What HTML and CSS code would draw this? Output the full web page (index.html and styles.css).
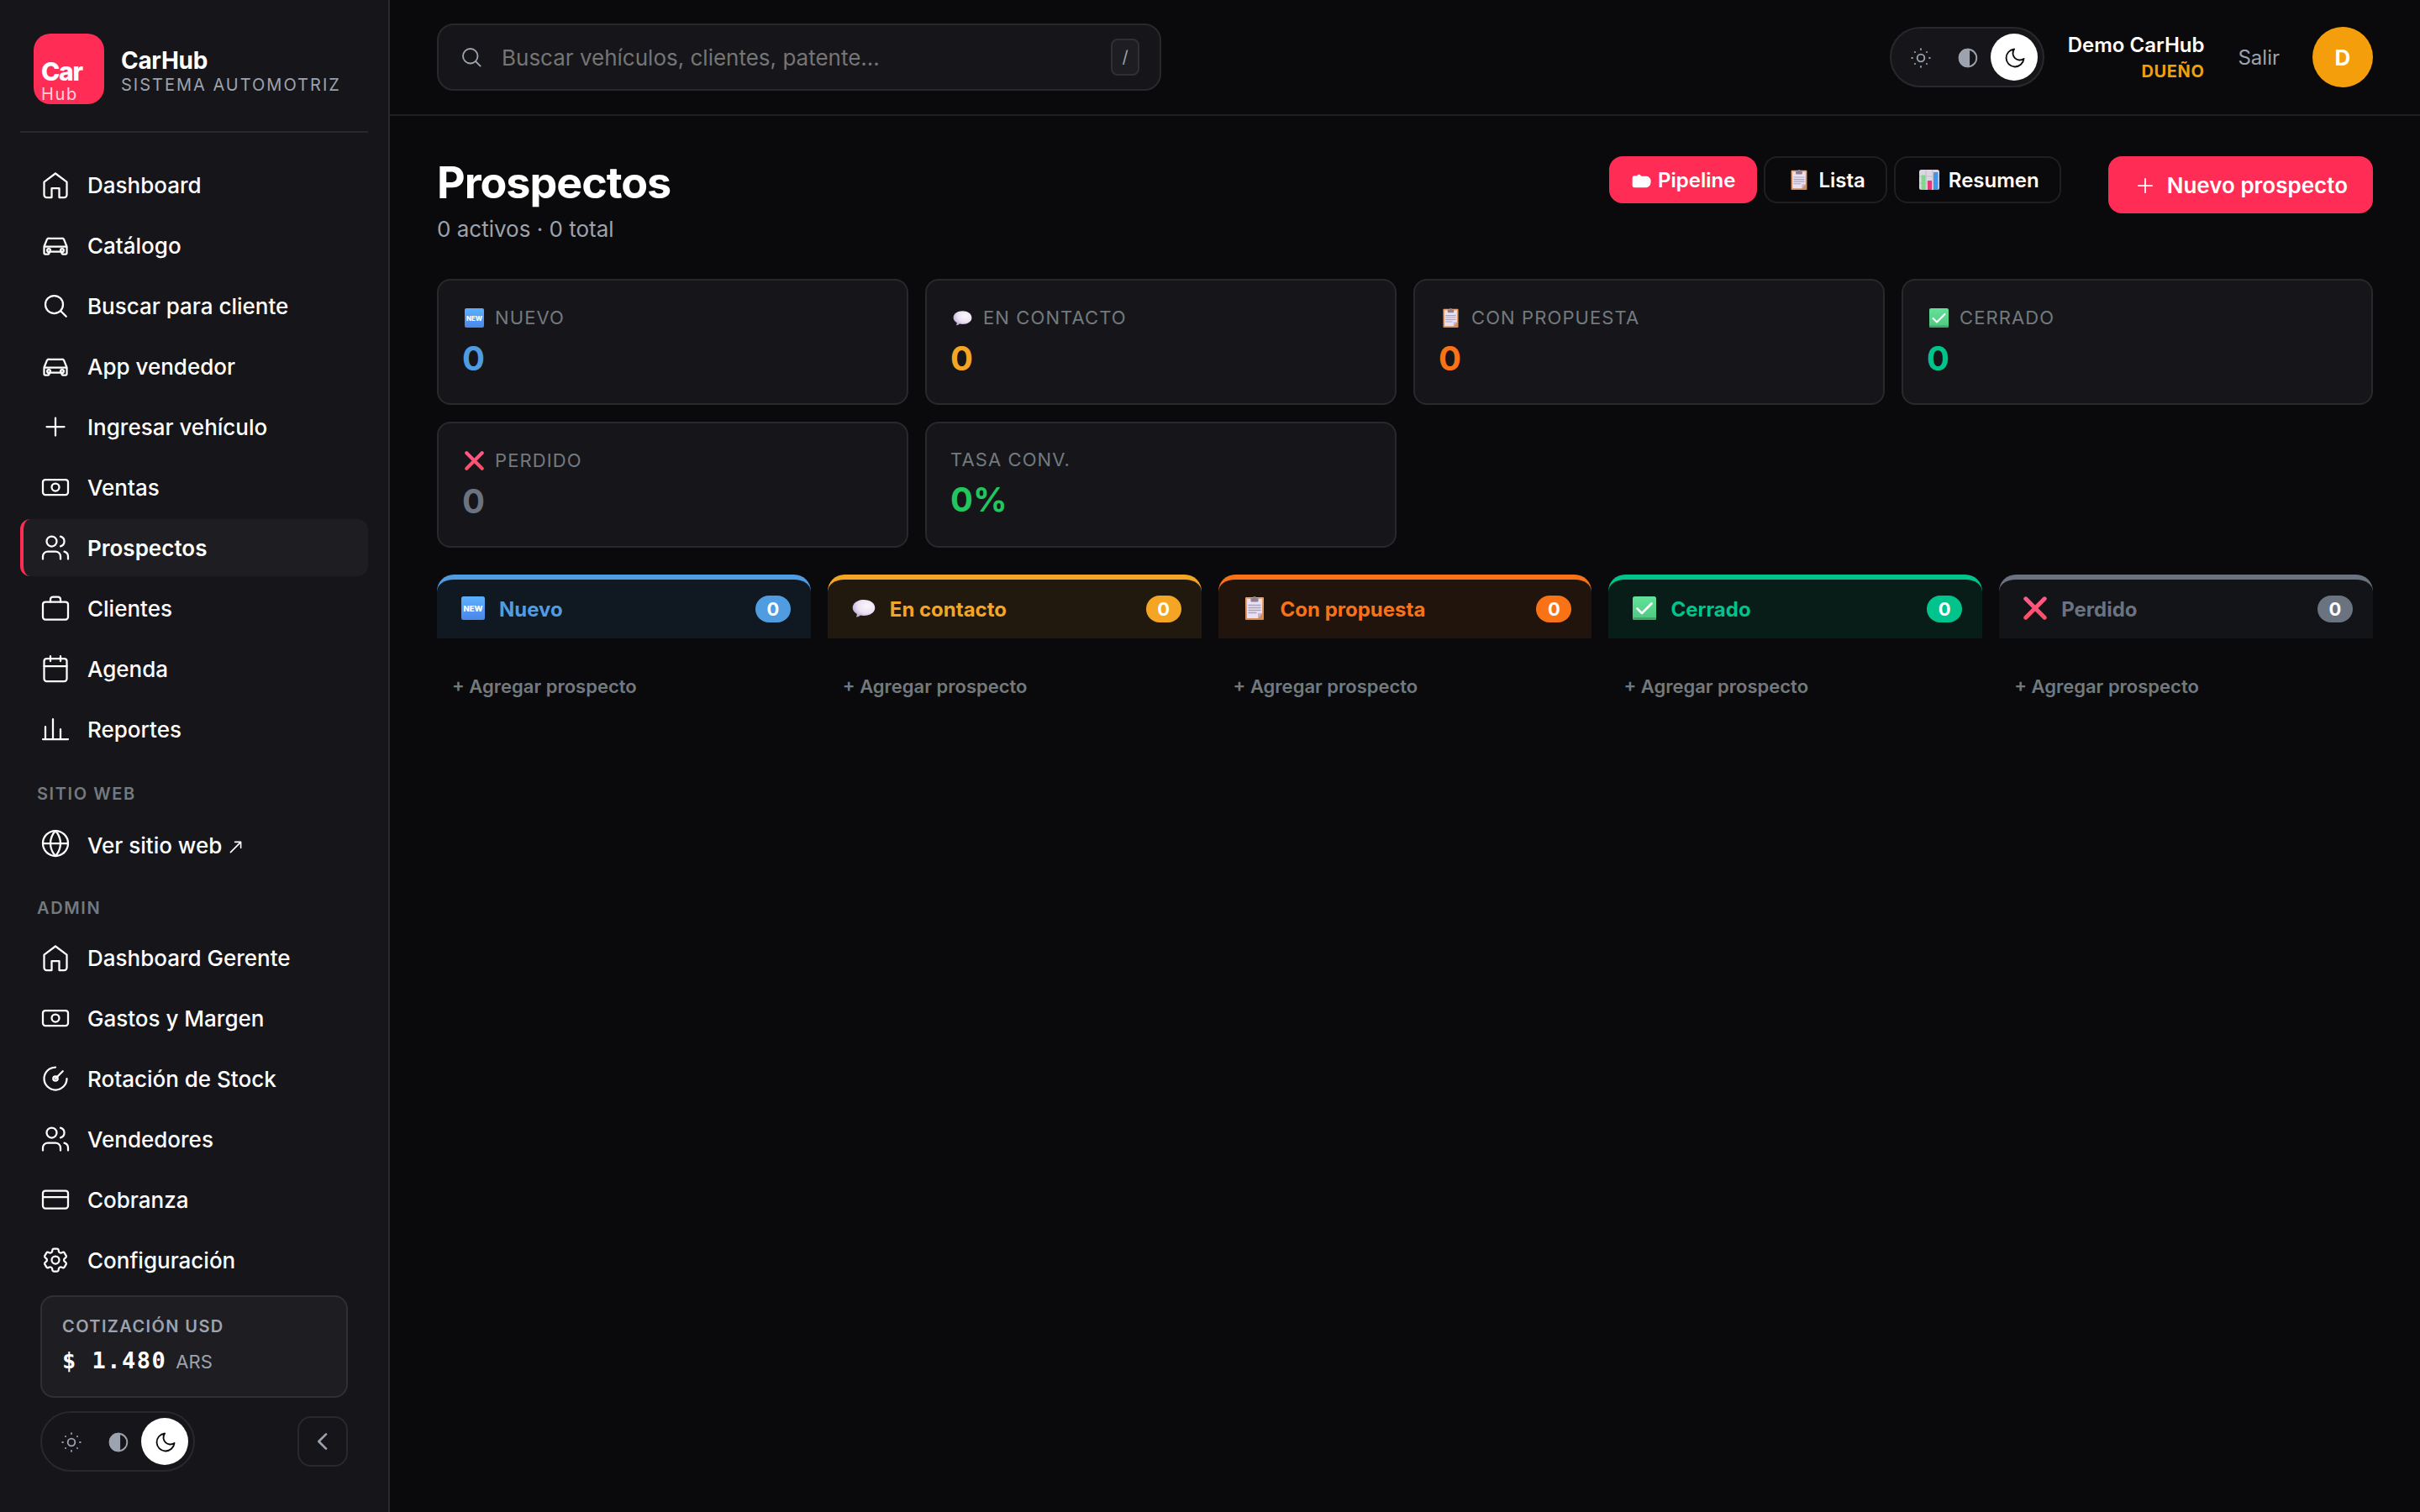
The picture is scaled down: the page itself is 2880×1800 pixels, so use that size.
FILE: index.html
```html
<!DOCTYPE html>
<html lang="es">
<head>
<meta charset="utf-8">
<title>Prospectos · CarHub</title>
<link rel="stylesheet" href="styles.css">
</head>
<body>
<svg class="sprite" aria-hidden="true">
  <defs>
    <linearGradient id="g-new" x1="0" y1="0" x2="0" y2="1"><stop offset="0" stop-color="#5cb0ff"/><stop offset="1" stop-color="#4a86e8"/></linearGradient>
    <linearGradient id="g-check" x1="0" y1="0" x2="0" y2="1"><stop offset="0" stop-color="#62e29a"/><stop offset="1" stop-color="#4fc780"/></linearGradient>
    <linearGradient id="g-cross" gradientUnits="userSpaceOnUse" x1="0" y1="0" x2="0" y2="28"><stop offset="0" stop-color="#ff5a8c"/><stop offset="1" stop-color="#fa4f64"/></linearGradient>
    <radialGradient id="g-bubble" cx=".65" cy=".35" r=".7"><stop offset="0" stop-color="#faf7fc"/><stop offset=".6" stop-color="#ebe2f2"/><stop offset="1" stop-color="#c0add6"/></radialGradient>
    <linearGradient id="g-board" x1="0" y1="0" x2="0" y2="1"><stop offset="0" stop-color="#f0a368"/><stop offset="1" stop-color="#d48a52"/></linearGradient>
  </defs>
  <symbol id="home" viewBox="0 0 24 24"><path d="M3 9.7 12 3l9 6.7V20a2 2 0 0 1-2 2h-4v-7.3H9V22H5a2 2 0 0 1-2-2z"/></symbol>
  <symbol id="car" viewBox="0 0 24 24"><path d="M3 13l2.1-5.3A2 2 0 0 1 7 6.5h10a2 2 0 0 1 1.9 1.2L21 13M3 13h18v5a1 1 0 0 1-1 1h-2a1 1 0 0 1-1-1v-1H7v1a1 1 0 0 1-1 1H4a1 1 0 0 1-1-1z"/><circle cx="6.7" cy="16" r="1.3"/><circle cx="17.3" cy="16" r="1.3"/></symbol>
  <symbol id="search" viewBox="0 0 24 24"><circle cx="11" cy="11" r="7"/><path d="m20.5 20.5-4.5-4.5"/></symbol>
  <symbol id="plus" viewBox="0 0 24 24"><path d="M12 5v14M5 12h14"/></symbol>
  <symbol id="cash" viewBox="0 0 24 24"><rect x="2" y="6" width="20" height="12" rx="2"/><circle cx="12" cy="12" r="3"/></symbol>
  <symbol id="users" viewBox="0 0 24 24"><path d="M16 21v-2a4 4 0 0 0-4-4H6a4 4 0 0 0-4 4v2"/><circle cx="9" cy="7" r="4"/><path d="M22 21v-2a4 4 0 0 0-3-3.87M16 3.13a4 4 0 0 1 0 7.75"/></symbol>
  <symbol id="case" viewBox="0 0 24 24"><rect x="2" y="7" width="20" height="14" rx="2"/><path d="M16 7V5a2 2 0 0 0-2-2h-4a2 2 0 0 0-2 2v2"/></symbol>
  <symbol id="calendar" viewBox="0 0 24 24"><rect x="3" y="4" width="18" height="18" rx="2"/><path d="M3 10h18M8 2v4M16 2v4"/></symbol>
  <symbol id="chart" viewBox="0 0 24 24"><path d="M2 20h20M4 20V10M10 20V4M16 20v-8"/></symbol>
  <symbol id="globe" viewBox="0 0 24 24"><circle cx="12" cy="12" r="10"/><path d="M2 12h20M12 2a15.3 15.3 0 0 1 4 10 15.3 15.3 0 0 1-4 10 15.3 15.3 0 0 1-4-10 15.3 15.3 0 0 1 4-10z"/></symbol>
  <symbol id="gauge" viewBox="0 0 24 24"><path d="M12 3a9 9 0 1 0 9 9M12 12l5.8-5.8"/><circle cx="12" cy="12" r="1.8"/></symbol>
  <symbol id="card" viewBox="0 0 24 24"><rect x="2" y="5" width="20" height="14" rx="2"/><path d="M2 10h20"/></symbol>
  <symbol id="gear" viewBox="0 0 24 24"><path d="M9.594 3.94c.09-.542.56-.94 1.11-.94h2.593c.55 0 1.02.398 1.11.94l.213 1.281c.063.374.313.686.645.87.074.04.147.083.22.127.325.196.72.257 1.075.124l1.217-.456a1.125 1.125 0 0 1 1.37.49l1.296 2.247a1.125 1.125 0 0 1-.26 1.431l-1.003.827c-.293.241-.438.613-.43.992a7.723 7.723 0 0 1 0 .255c-.008.378.137.75.43.991l1.004.827c.424.35.534.955.26 1.43l-1.298 2.247a1.125 1.125 0 0 1-1.369.491l-1.217-.456c-.355-.133-.75-.072-1.076.124a6.47 6.47 0 0 1-.22.128c-.331.183-.581.495-.644.869l-.213 1.281c-.09.543-.56.94-1.11.94h-2.594c-.55 0-1.019-.398-1.11-.94l-.213-1.281c-.062-.374-.312-.686-.644-.87a6.52 6.52 0 0 1-.22-.127c-.325-.196-.72-.257-1.076-.124l-1.217.456a1.125 1.125 0 0 1-1.369-.49l-1.297-2.247a1.125 1.125 0 0 1 .26-1.431l1.004-.827c.292-.24.437-.613.43-.991a6.932 6.932 0 0 1 0-.255c.007-.38-.138-.751-.43-.992l-1.004-.827a1.125 1.125 0 0 1-.26-1.43l1.297-2.247a1.125 1.125 0 0 1 1.37-.491l1.216.456c.356.133.751.072 1.076-.124.072-.044.146-.086.22-.128.332-.183.582-.495.644-.869l.214-1.28Z"/><circle cx="12" cy="12" r="3"/></symbol>
  <symbol id="sun" viewBox="0 0 24 24"><circle cx="12" cy="12" r="3.7"/><path d="M12 2.8v.6M12 20.6v.6M2.8 12h.6M20.6 12h.6M5.9 5.9l.2.2M17.9 17.9l.2.2M5.9 18.1l.2-.2M17.9 6.1l.2-.2"/></symbol>
  <symbol id="half" viewBox="0 0 24 24"><circle cx="12" cy="12" r="8.8"/><path fill="currentColor" d="M13 3.2h-1a8.8 8.8 0 0 0 0 17.6h1z"/></symbol>
  <symbol id="moon" viewBox="0 0 24 24"><path d="M21 12.79A9 9 0 1 1 11.21 3 7 7 0 0 0 21 12.79z"/></symbol>
  <symbol id="chevron" viewBox="0 0 24 24"><path d="m15 5.5-6.5 6.5 6.5 6.5"/></symbol>
  <symbol id="e-check" viewBox="0 0 28 28"><rect width="28" height="28" rx="2.5" fill="url(#g-check)"/><rect y="25" width="28" height="3" rx="1.5" fill="#3fa868"/><path d="m5.5 14.5 5.5 5.5L22.5 8.5" fill="none" stroke="#fff" stroke-width="2.6" stroke-linecap="round" stroke-linejoin="round"/></symbol>
  <symbol id="e-cross" viewBox="0 0 28 28"><path d="M2.8 2.8l22.4 22.4M25.2 2.8 2.8 25.2" fill="none" stroke="url(#g-cross)" stroke-width="5" stroke-linecap="round"/></symbol>
  <symbol id="e-bubble" viewBox="0 0 28 28"><path d="M14 4c7.5 0 13.3 4 13.3 9.6S21.5 23 14 23c-1.6 0-3-.2-4.3-.5-1 1-2.5 2-4.3 2.100-.5 0-.5-.4-.2-.8.6-.9.7-2 .4-3.100C2.600 19 .7 16.500.7 13.600.7 8 6.500 4 14 4z" fill="url(#g-bubble)"/></symbol>
  <symbol id="e-board" viewBox="0 0 28 28"><rect x="3" y="1" width="22" height="27" rx="1" fill="url(#g-board)"/><path d="M5 3h18v17l-5 6H5z" fill="#e9e1f3"/><path d="M18 20h5l-5 6z" fill="#c3b5d8"/><path d="M7 10.5h14M7 13.5h14M7 16.5h14M7 19.5h9" stroke="#aea3bb" stroke-width="1.3"/><path d="M12.5 0h3v2h3v3.5a1 1 0 0 1-1 1h-7a1 1 0 0 1-1-1V2h3z" fill="#8c7f90"/></symbol>
  <symbol id="e-bars" viewBox="0 0 24 24"><rect width="24" height="24" rx="2.5" fill="#dcd6e3"/><path d="M0 8h24M0 16h24M8 0v24M16 0v24" stroke="#bdb5c6" stroke-width=".8"/><path d="M2.500 6.500h5V24h-5z" fill="#7ed98b"/><path d="M10 13h5v11h-5z" fill="#e33a78"/><path d="M17 3h5.500v21H17z" fill="#3b98ee"/></symbol>
  <symbol id="e-folder" viewBox="0 0 24 18"><path fill="#fff" d="M3 2.500h3.500C7 .5 10 0 11 2l1 .8h6.500c2 0 2.500 1 3.500 2 1.500 1.500 2 3 1.700 5 .3 2-.7 5-2.700 6.200-1 1.200-2.500 1.300-3.500 1.200H3A2.500 2.500 0 0 1 .500 14.700V5A2.500 2.500 0 0 1 3 2.500z"/></symbol>
</svg>

<div class="app">
  <aside class="sidebar">
    <div class="brand">
      <div class="logo"><b>Car</b><span>Hub</span></div>
      <div class="brand-text"><strong>CarHub</strong><span>SISTEMA AUTOMOTRIZ</span></div>
    </div>
    <nav class="nav">
      <a class="item"><svg class="icon"><use href="#home"/></svg>Dashboard</a>
      <a class="item"><svg class="icon"><use href="#car"/></svg>Catálogo</a>
      <a class="item"><svg class="icon"><use href="#search"/></svg>Buscar para cliente</a>
      <a class="item"><svg class="icon"><use href="#car"/></svg>App vendedor</a>
      <a class="item"><svg class="icon"><use href="#plus"/></svg>Ingresar vehículo</a>
      <a class="item"><svg class="icon"><use href="#cash"/></svg>Ventas</a>
      <a class="item active"><svg class="icon"><use href="#users"/></svg>Prospectos</a>
      <a class="item"><svg class="icon"><use href="#case"/></svg>Clientes</a>
      <a class="item"><svg class="icon"><use href="#calendar"/></svg>Agenda</a>
      <a class="item"><svg class="icon"><use href="#chart"/></svg>Reportes</a>
      <div class="section">SITIO WEB</div>
      <a class="item external"><svg class="icon"><use href="#globe"/></svg><span>Ver sitio web <svg class="arrow" viewBox="0 0 16 16"><path d="M1.500 14.500 14 2M7 1.500h7.500V9"/></svg></span></a>
      <div class="section">ADMIN</div>
      <a class="item"><svg class="icon"><use href="#home"/></svg>Dashboard Gerente</a>
      <a class="item"><svg class="icon"><use href="#cash"/></svg>Gastos y Margen</a>
      <a class="item"><svg class="icon"><use href="#gauge"/></svg>Rotación de Stock</a>
      <a class="item"><svg class="icon"><use href="#users"/></svg>Vendedores</a>
      <a class="item"><svg class="icon"><use href="#card"/></svg>Cobranza</a>
      <a class="item"><svg class="icon"><use href="#gear"/></svg>Configuración</a>
    </nav>
    <div class="side-foot">
      <div class="rate">
        <div class="rate-label">COTIZACIÓN USD</div>
        <div class="rate-value"><b>$ 1.480</b><span>ARS</span></div>
      </div>
      <div class="side-row">
        <div class="theme">
          <button><svg><use href="#sun"/></svg></button>
          <button><svg><use href="#half"/></svg></button>
          <button class="on"><svg><use href="#moon"/></svg></button>
        </div>
        <button class="collapse"><svg><use href="#chevron"/></svg></button>
      </div>
    </div>
  </aside>

  <div class="main">
    <header class="topbar">
      <label class="search">
        <svg><use href="#search"/></svg>
        <span class="placeholder">Buscar vehículos, clientes, patente...</span>
        <kbd>/</kbd>
      </label>
      <div class="account">
        <div class="theme filled">
          <button><svg><use href="#sun"/></svg></button>
          <button><svg><use href="#half"/></svg></button>
          <button class="on"><svg><use href="#moon"/></svg></button>
        </div>
        <div class="user"><strong>Demo CarHub</strong><span>DUEÑO</span></div>
        <a class="logout">Salir</a>
        <div class="avatar">D</div>
      </div>
    </header>

    <main class="content">
      <div class="page-head">
        <div>
          <h1>Prospectos</h1>
          <p class="sub">0 activos · 0 total</p>
        </div>
        <div class="actions">
          <div class="tabs">
            <button class="tab on"><svg class="folder"><use href="#e-folder"/></svg>Pipeline</button>
            <button class="tab"><svg class="emoji"><use href="#e-board"/></svg>Lista</button>
            <button class="tab"><svg class="emoji"><use href="#e-bars"/></svg>Resumen</button>
          </div>
          <button class="primary"><svg><use href="#plus"/></svg>Nuevo prospecto</button>
        </div>
      </div>

      <section class="stats">
        <div class="stat blue"><div class="stat-label"><svg class="new" viewBox="0 0 28 28"><rect width="28" height="28" rx="2.5" fill="url(#g-new)"/><text x="14" y="18">NEW</text></svg>NUEVO</div><div class="num">0</div></div>
        <div class="stat amber"><div class="stat-label"><svg><use href="#e-bubble"/></svg>EN CONTACTO</div><div class="num">0</div></div>
        <div class="stat orange"><div class="stat-label"><svg><use href="#e-board"/></svg>CON PROPUESTA</div><div class="num">0</div></div>
        <div class="stat green"><div class="stat-label"><svg><use href="#e-check"/></svg>CERRADO</div><div class="num">0</div></div>
        <div class="stat gray"><div class="stat-label"><svg><use href="#e-cross"/></svg>PERDIDO</div><div class="num">0</div></div>
        <div class="stat lime"><div class="stat-label plain">TASA CONV.</div><div class="num">0%</div></div>
      </section>

      <section class="board">
        <div class="column blue"><div class="column-head"><svg class="new" viewBox="0 0 28 28"><rect width="28" height="28" rx="2.5" fill="url(#g-new)"/><text x="14" y="18">NEW</text></svg><span>Nuevo</span><i>0</i></div><a class="add">+ Agregar prospecto</a></div>
        <div class="column amber"><div class="column-head"><svg><use href="#e-bubble"/></svg><span>En contacto</span><i>0</i></div><a class="add">+ Agregar prospecto</a></div>
        <div class="column orange"><div class="column-head"><svg><use href="#e-board"/></svg><span>Con propuesta</span><i>0</i></div><a class="add">+ Agregar prospecto</a></div>
        <div class="column green"><div class="column-head"><svg><use href="#e-check"/></svg><span>Cerrado</span><i>0</i></div><a class="add">+ Agregar prospecto</a></div>
        <div class="column gray"><div class="column-head"><svg><use href="#e-cross"/></svg><span>Perdido</span><i>0</i></div><a class="add">+ Agregar prospecto</a></div>
      </section>
    </main>
  </div>
</div>
</body>
</html>
```
FILE: styles.css
```css
:root {
  --bg: #0a0a0c;
  --surface: #16161a;
  --raised: #1e1e22;
  --line: #29292c;
  --accent: #ff2d55;
  --muted: #9ca3af;
  --dim: #737a7e;
}

* { box-sizing: border-box; }

body {
  margin: 0;
  background: var(--bg);
  color: #fff;
  font-family: Inter, "Liberation Sans", sans-serif;
  font-size: 28px;
}

button { font: inherit; color: inherit; margin: 0; padding: 0; border: 0; background: none; }
svg { fill: none; stroke-linecap: round; stroke-linejoin: round; flex: none; display: block; }
.sprite { position: absolute; width: 0; height: 0; }

.app { display: flex; width: 2880px; height: 1800px; overflow: hidden; }

/* Sidebar */
.sidebar {
  width: 464px;
  flex: none;
  display: flex;
  flex-direction: column;
  padding: 0 24px;
  background: var(--surface);
  border-right: 2px solid var(--line);
}
.brand {
  display: flex;
  align-items: flex-start;
  gap: 20px;
  height: 158px;
  padding: 40px 16px 0;
  border-bottom: 2px solid var(--line);
}
.logo {
  width: 84px;
  height: 84px;
  border-radius: 20px;
  padding: 30px 0 0 9px;
  background: var(--accent);
  overflow: hidden;
}
.logo b { display: block; font-size: 30px; line-height: 30px; font-weight: 800; letter-spacing: -1.2px; }
.logo span { display: block; font-size: 20px; line-height: 24px; letter-spacing: 1.6px; color: rgba(255, 255, 255, .8); }
.brand-text { padding-top: 15px; }
.brand-text strong { display: block; font-size: 28px; line-height: 34px; font-weight: 700; letter-spacing: -.3px; }
.brand-text span { display: block; font-size: 20px; line-height: 25px; letter-spacing: 2px; color: var(--muted); white-space: nowrap; }

.nav { display: flex; flex-direction: column; gap: 4px; padding-top: 28px; }
.item {
  display: flex;
  align-items: center;
  gap: 20px;
  height: 68px;
  padding-left: 20px;
  border-left: 4px solid transparent;
  border-radius: 12px;
  font-size: 26px;
  font-weight: 500;
}
.item.active { background: var(--raised); border-left-color: var(--accent); font-weight: 600; }
.external span { padding-top: 5px; }
.arrow { display: inline-block; width: 15px; height: 15px; stroke: #fff; stroke-width: 1.7; margin-left: 2px; }
.icon { width: 36px; height: 36px; stroke: #fff; stroke-width: 1.5; }
.section {
  height: 60px;
  padding: 27px 0 0 20px;
  font-size: 20px;
  line-height: 24px;
  font-weight: 600;
  letter-spacing: 1.6px;
  color: var(--dim);
}

.side-foot { padding: 8px 24px 0; }
.rate {
  height: 122px;
  padding: 22px 24px;
  border: 2px solid #303034;
  border-radius: 16px;
  background: var(--raised);
}
.rate-label { font-size: 20px; line-height: 26px; font-weight: 600; letter-spacing: 1.4px; color: var(--muted); }
.rate-value { display: flex; align-items: baseline; gap: 11px; margin-top: 10px; line-height: 36px; }
.rate-value b { font-family: "DejaVu Sans Mono", monospace; font-size: 27px; letter-spacing: 1.5px; }
.rate-value span { font-size: 22px; color: var(--muted); }
.side-row { display: flex; align-items: center; justify-content: space-between; margin-top: 16px; }

.theme {
  display: flex;
  width: 184px;
  height: 72px;
  padding: 6px;
  border: 2px solid var(--line);
  border-radius: 36px;
  color: var(--muted);
}
.theme.filled { background: var(--surface); }
.theme button { width: 56px; height: 56px; border-radius: 50%; display: grid; place-items: center; padding: 2px 0 0 2px; }
.theme .on { background: #fff; color: #0a0a0c; }
.theme svg { width: 28px; height: 28px; stroke: currentColor; stroke-width: 1.6; }
.collapse { width: 60px; height: 60px; border: 2px solid var(--line); border-radius: 16px; display: grid; place-items: center; }
.collapse svg { width: 32px; height: 32px; stroke: var(--muted); stroke-width: 2; }

/* Top bar */
.main { flex: 1; min-width: 0; }
.topbar {
  display: flex;
  align-items: center;
  justify-content: space-between;
  height: 138px;
  padding: 0 56px;
  border-bottom: 2px solid #1f1f22;
}
.search {
  display: flex;
  align-items: center;
  width: 862px;
  height: 80px;
  padding: 0 24px;
  border: 2px solid var(--line);
  border-radius: 20px;
  background: var(--surface);
}
.search svg { width: 30px; height: 30px; stroke: var(--muted); stroke-width: 1.5; }
.placeholder { flex: 1; padding: 1px 0 0 21px; font-size: 26px; color: #757575; }
kbd {
  width: 34px;
  height: 44px;
  border: 2px solid #303034;
  border-radius: 8px;
  background: var(--raised);
  color: var(--muted);
  font: 20px/41px Inter, sans-serif;
  text-align: center;
}
.account { display: flex; align-items: center; }
.user { margin-left: 28px; padding-top: 1px; text-align: right; }
.user strong { display: block; font-size: 24px; line-height: 32px; font-weight: 600; }
.user span { display: block; font-size: 20px; line-height: 30px; font-weight: 700; letter-spacing: .6px; color: #f59e0b; }
.logout { margin-left: 40px; font-size: 24px; color: var(--muted); }
.avatar {
  width: 72px;
  height: 72px;
  margin-left: 39px;
  border-radius: 50%;
  background: #f59e0b;
  font-size: 26px;
  line-height: 73px;
  font-weight: 700;
  text-align: center;
}

/* Page header */
.content { padding: 48px 56px; }
.page-head { display: flex; justify-content: space-between; height: 146px; }
h1 { margin: 0; font-size: 52px; line-height: 64px; font-weight: 700; letter-spacing: -1.04px; }
.sub { margin: 7px 0 0; font-size: 26px; line-height: 32px; color: var(--muted); }
.actions { display: flex; align-items: flex-start; gap: 56px; }
.tabs { display: flex; gap: 8px; }
.tab {
  display: flex;
  align-items: center;
  height: 56px;
  padding: 1px 24px 0;
  border: 2px solid #1f1f22;
  border-radius: 16px;
  font-size: 24px;
  font-weight: 600;
}
.tab.on { background: var(--accent); border-color: var(--accent); }
.tab .emoji { width: 24px; height: 24px; margin: 0 11px 2px 4px; }
.tab .folder { width: 23px; height: 17px; margin: 2px 8px 0 1px; }
.primary {
  display: flex;
  align-items: center;
  height: 68px;
  padding: 1px 30px 0 30px;
  border-radius: 16px;
  background: var(--accent);
  font-size: 26px;
  font-weight: 600;
}
.primary svg { width: 28px; height: 28px; margin-right: 12px; stroke: #fff; stroke-width: 1.5; }

/* Stage palette */
.blue { --c: #4f9de0; }
.amber { --c: #f5a524; }
.orange { --c: #f97316; }
.green { --c: #00c48c; }
.gray { --c: #6b7280; }
.lime { --c: #22c55e; }

.stats { display: grid; grid-template-columns: repeat(4, 1fr); gap: 20px; }
.stat {
  height: 150px;
  padding: 30px 28px;
  border: 2px solid var(--line);
  border-radius: 16px;
  background: var(--surface);
}
.stat-label { display: flex; align-items: center; height: 28px; gap: 13px; font-size: 22px; letter-spacing: 1.1px; color: var(--dim); }
.stat-label.plain { height: 26px; }
.stat-label svg { width: 23px; height: 23px; margin-left: 3px; }
.num { margin-top: 10px; font-size: 40px; line-height: 50px; font-weight: 700; color: var(--c); }
.new text { font-family: Inter, sans-serif; font-size: 9.5px; font-weight: 800; fill: #fff; text-anchor: middle; letter-spacing: 0; }

.board { display: grid; grid-template-columns: repeat(5, 1fr); gap: 20px; margin-top: 32px; }
.column-head {
  display: flex;
  align-items: center;
  height: 76px;
  padding: 0 24px 0 29px;
  border-top: 6px solid var(--c);
  border-radius: 20px 20px 0 0;
  background: color-mix(in srgb, var(--c) 10%, transparent);
  color: var(--c);
}
.column-head svg { width: 28px; height: 28px; margin-bottom: 2px; }
.column-head span { flex: 1; padding-left: 17px; font-size: 24px; font-weight: 700; }
.column-head i {
  width: 42px;
  height: 32px;
  border-radius: 16px;
  background: var(--c);
  color: #fff;
  font-size: 22px;
  line-height: 32px;
  font-style: normal;
  font-weight: 700;
  text-align: center;
}
.add { display: block; padding: 42px 0 0 18px; font-size: 22px; line-height: 30px; font-weight: 600; color: var(--dim); }
```
